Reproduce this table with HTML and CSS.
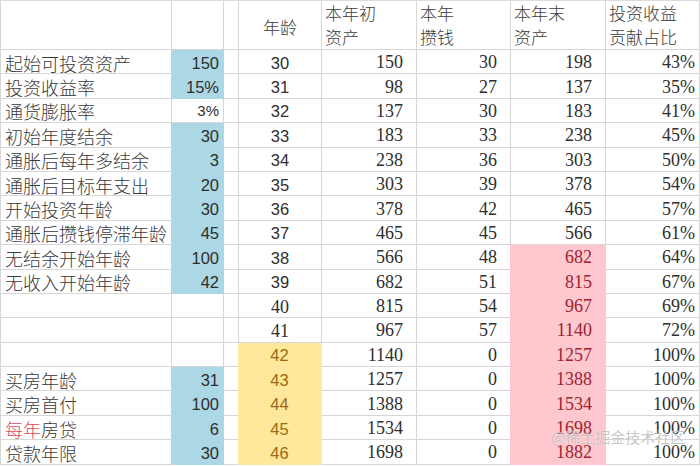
FILE: index.html
```html
<!DOCTYPE html>
<html lang="zh-CN">
<head>
<meta charset="utf-8">
<title>投资测算表</title>
<link rel="stylesheet" href="styles.css">
</head>
<body>
<div class="page">
  <div class="sheet">
    <div class="c"></div><div class="c"></div><div class="c"></div>
    <div class="c hd hd-center">年龄</div>
    <div class="c hd">本年初<br>资产</div>
    <div class="c hd">本年<br>攒钱</div>
    <div class="c hd">本年末<br>资产</div>
    <div class="c hd">投资收益<br>贡献占比</div>

    <div class="c lab">起始可投资资产</div><div class="c val blue">150</div><div class="c"></div><div class="c age">30</div><div class="c num">150</div><div class="c num">30</div><div class="c num">198</div><div class="c pct">43%</div>
    <div class="c lab">投资收益率</div><div class="c val blue">15%</div><div class="c"></div><div class="c age">31</div><div class="c num">98</div><div class="c num">27</div><div class="c num">137</div><div class="c pct">35%</div>
    <div class="c lab">通货膨胀率</div><div class="c val small">3%</div><div class="c"></div><div class="c age">32</div><div class="c num">137</div><div class="c num">30</div><div class="c num">183</div><div class="c pct">41%</div>
    <div class="c lab">初始年度结余</div><div class="c val blue">30</div><div class="c"></div><div class="c age">33</div><div class="c num">183</div><div class="c num">33</div><div class="c num">238</div><div class="c pct">45%</div>
    <div class="c lab">通胀后每年多结余</div><div class="c val blue">3</div><div class="c"></div><div class="c age">34</div><div class="c num">238</div><div class="c num">36</div><div class="c num">303</div><div class="c pct">50%</div>
    <div class="c lab">通胀后目标年支出</div><div class="c val blue">20</div><div class="c"></div><div class="c age">35</div><div class="c num">303</div><div class="c num">39</div><div class="c num">378</div><div class="c pct">54%</div>
    <div class="c lab">开始投资年龄</div><div class="c val blue">30</div><div class="c"></div><div class="c age">36</div><div class="c num">378</div><div class="c num">42</div><div class="c num">465</div><div class="c pct">57%</div>
    <div class="c lab">通胀后攒钱停滞年龄</div><div class="c val blue">45</div><div class="c"></div><div class="c age">37</div><div class="c num">465</div><div class="c num">45</div><div class="c num">566</div><div class="c pct">61%</div>
    <div class="c lab">无结余开始年龄</div><div class="c val blue">100</div><div class="c"></div><div class="c age">38</div><div class="c num">566</div><div class="c num">48</div><div class="c num pink">682</div><div class="c pct">64%</div>
    <div class="c lab">无收入开始年龄</div><div class="c val blue">42</div><div class="c"></div><div class="c age">39</div><div class="c num">682</div><div class="c num">51</div><div class="c num pink">815</div><div class="c pct">67%</div>
    <div class="c lab"></div><div class="c val"></div><div class="c"></div><div class="c age serif">40</div><div class="c num">815</div><div class="c num">54</div><div class="c num pink">967</div><div class="c pct">69%</div>
    <div class="c lab"></div><div class="c val"></div><div class="c"></div><div class="c age serif">41</div><div class="c num">967</div><div class="c num">57</div><div class="c num pink">1140</div><div class="c pct">72%</div>
    <div class="c lab"></div><div class="c val"></div><div class="c"></div><div class="c age yel">42</div><div class="c num">1140</div><div class="c num">0</div><div class="c num pink">1257</div><div class="c pct">100%</div>
    <div class="c lab">买房年龄</div><div class="c val blue">31</div><div class="c"></div><div class="c age yel">43</div><div class="c num">1257</div><div class="c num">0</div><div class="c num pink">1388</div><div class="c pct">100%</div>
    <div class="c lab">买房首付</div><div class="c val blue">100</div><div class="c"></div><div class="c age yel">44</div><div class="c num">1388</div><div class="c num">0</div><div class="c num pink">1534</div><div class="c pct">100%</div>
    <div class="c lab"><span class="red">每年</span>房贷</div><div class="c val blue">6</div><div class="c"></div><div class="c age yel">45</div><div class="c num">1534</div><div class="c num">0</div><div class="c num pink">1698</div><div class="c pct">100%</div>
    <div class="c lab">贷款年限</div><div class="c val blue">30</div><div class="c"></div><div class="c age yel">46</div><div class="c num">1698</div><div class="c num">0</div><div class="c num pink">1882</div><div class="c pct">100%</div>
  </div>
  <div class="watermark">@稀土掘金技术社区</div>
</div>
</body>
</html>
```
FILE: styles.css
```css
html, body {
  margin: 0;
  padding: 0;
  background: #ffffff;
}
body {
  width: 700px;
  height: 466px;
  overflow: hidden;
}
.page {
  position: relative;
  width: 700px;
  height: 466px;
}
.sheet {
  display: grid;
  grid-template-columns: 171px 52px 15px 83px 95px 94px 95px 94px;
  grid-template-rows: 49px repeat(17, 24.4px);
  border-left: 1px solid #d6d6d6;
  border-top: 1px solid #dcdcdc;
  color: #333333;
}
.c {
  box-sizing: border-box;
  border-right: 1px solid #d6d6d6;
  border-bottom: 1px solid #d6d6d6;
  display: flex;
  align-items: center;
  min-width: 0;
  overflow: hidden;
  white-space: nowrap;
  line-height: 22px;
}
.hd {
  font-family: "Noto Sans CJK SC", sans-serif;
  font-size: 17px;
  font-weight: 300;
  color: #3c3c3c;
  line-height: 24px;
  padding: 0 0 0 3px;
  align-items: flex-start;
}
.hd-center {
  justify-content: center;
  align-items: center;
  padding: 3px 0 0 0;
}
.lab {
  font-family: "Noto Sans CJK SC", sans-serif;
  font-size: 18px;
  font-weight: 300;
  color: #3a3a3a;
  padding: 2px 0 0 4px;
}
.red {
  color: #e0485a;
}
.val {
  font-family: "Liberation Sans", Arial, sans-serif;
  font-size: 16.5px;
  justify-content: flex-end;
  padding: 2px 4px 0 0;
  color: #2e2e2e;
}
.small {
  font-size: 15px;
}
.age {
  font-family: "Liberation Sans", Arial, sans-serif;
  font-size: 16.5px;
  justify-content: center;
  padding-top: 2px;
  color: #2e2e2e;
}
.serif {
  font-family: "Liberation Serif", "Times New Roman", serif;
  font-size: 18px;
}
.num {
  font-family: "Liberation Serif", "Times New Roman", serif;
  font-size: 18px;
  justify-content: flex-end;
  padding: 1px 13px 0 0;
  color: #2e2e2e;
}
.pct {
  font-family: "Liberation Serif", "Times New Roman", serif;
  font-size: 18px;
  justify-content: flex-end;
  padding: 1px 4px 0 0;
  color: #2e2e2e;
}
.blue {
  background: #acd8e5;
  border-color: #acd8e5;
  margin-left: -1px;
}
.yel {
  background: #ffe89c;
  border-color: #ffe89c;
  color: #9c6a10;
  margin-left: -1px;
}
.pink {
  background: #ffc8ce;
  border-color: #ffc8ce;
  color: #a0222e;
  margin-left: -1px;
}
.watermark {
  position: absolute;
  left: 551px;
  top: 428px;
  font-family: "Noto Sans CJK SC", sans-serif;
  font-size: 15px;
  line-height: 18px;
  color: rgba(150, 150, 150, 0.55);
  text-shadow: 0 0 1px rgba(255, 255, 255, 0.9);
  white-space: nowrap;
}
```
